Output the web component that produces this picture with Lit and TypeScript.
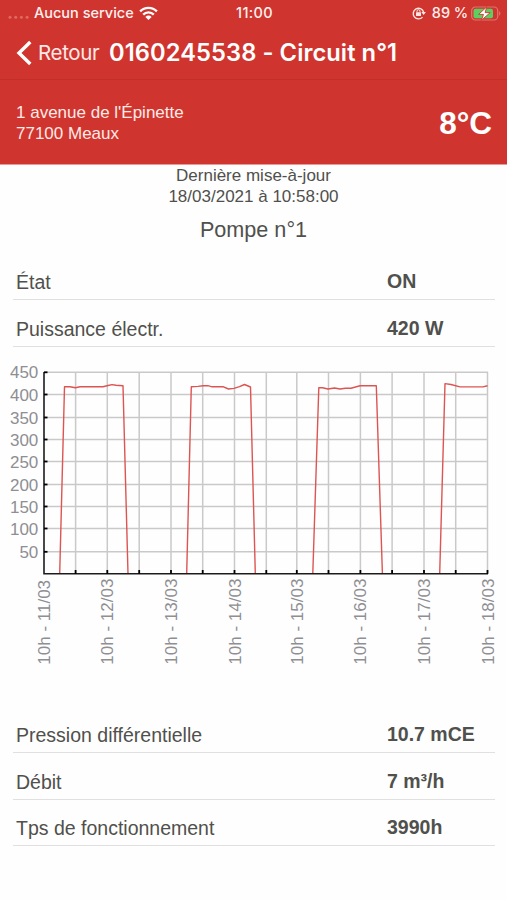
import { LitElement, html, svg, css } from "lit";
import { customElement, property } from "lit/decorators.js";

type Row = { label: string; value: string };

@customElement("status-bar")
class StatusBar extends LitElement {
  static styles = css`
    :host { display: grid; grid-template-columns: 1fr auto 1fr; height: 27px; align-items: center; padding: 0 6px 1px 8px; box-sizing: border-box; font: 500 14.5px/26px Inter, "Liberation Sans", sans-serif; color: #fff0ee; }
    .side { display: flex; align-items: center; height: 26px; }
    .right { justify-content: flex-end; }
    .carrier { margin-left: 4px; white-space: nowrap; }
    .clock { letter-spacing: 0.35px; }
    .wifi { margin-left: 5px; }
    .pct { margin: 0 3px 0 6px; white-space: nowrap; letter-spacing: -0.1px; }
    svg { display: block; flex: none; }
  `;
  render() {
    return html`
      <div class="side">
        <svg width="22" height="20" fill="#de6a63">
          <circle cx="2" cy="14.2" r="1.5" /><circle cx="7.7" cy="14.2" r="1.5" /><circle cx="13.4" cy="14.2" r="1.5" /><circle cx="19.1" cy="14.2" r="1.5" />
        </svg>
        <span class="carrier">Aucun service</span>
        <svg class="wifi" width="19" height="14" viewBox="0 0 19 14">
          <g fill="none" stroke="#fff" stroke-width="2.3">
            <path d="M1.1 5.4a11.9 11.9 0 0 1 16.8 0" /><path d="M4.2 8.6a7.5 7.5 0 0 1 10.6 0" />
          </g>
          <path fill="#fff" d="M6.4 10.9a4.4 4.4 0 0 1 6.2 0L9.5 14z" />
        </svg>
      </div>
      <span class="clock">11:00</span>
      <div class="side right">
        <svg width="14" height="14" viewBox="0 0 14 14">
          <path d="M10.5 11.1A5.3 5.3 0 1 1 11.6 6" fill="none" stroke="#ffe6e3" stroke-width="1.4" />
          <path d="M9.3 6.1h4.6l-2.3 3z" fill="#ffe6e3" />
          <rect x="4" y="6.2" width="5" height="3.8" rx=".6" fill="#ffe6e3" />
          <path d="M5 6.4V5.2a1.5 1.5 0 0 1 3 0v1.2" fill="none" stroke="#ffe6e3" stroke-width="1" />
        </svg>
        <span class="pct">89 %</span>
        <svg width="30" height="15" viewBox="0 0 30 15">
          <rect x=".7" y="1" width="26" height="13" rx="3.6" fill="none" stroke="#de756e" stroke-width="1.2" />
          <path d="M28.1 5.3c1.7.5 1.7 3.9 0 4.4z" fill="#de756e" />
          <rect x="2.5" y="2.8" width="19.5" height="9.4" rx="2" fill="#5fce62" />
          <path d="M15.8 .8 7.6 8.4h4.9L10.4 14.3 19.2 6.6h-5.1z" fill="#fff" stroke="#cf352e" stroke-width=".9" />
        </svg>
      </div>
    `;
  }
}

@customElement("data-rows")
class DataRows extends LitElement {
  @property({ attribute: false }) rows: Row[] = [];
  static styles = css`
    :host { display: block; padding: 0 12px 0 13px; color: #50504c; font: 19.5px/24px "Liberation Sans", Arial, sans-serif; }
    .row { display: grid; grid-template-columns: 371px 1fr; height: 46.5px; align-items: end; box-sizing: border-box; padding: 0 0 5px 3px; border-bottom: 1.5px solid #e0e0e0; }
    .value { font-weight: 700; padding: 0 0 1px 0; }
  `;
  render() {
    return this.rows.map(
      (r) => html`<div class="row"><span>${r.label}</span><span class="value">${r.value}</span></div>`
    );
  }
}

@customElement("power-chart")
class PowerChart extends LitElement {
  static styles = css`
    :host { display: block; height: 320px; }
    svg { display: block; }
    .grid { stroke: #c9c9c9; stroke-width: 1.5; }
    .axis { stroke: #1c1c1e; stroke-width: 1.6; fill: none; }
    .tick { stroke: #000; stroke-width: 1.8; }
    .series { stroke: #dc5552; stroke-width: 1.4; fill: none; stroke-linejoin: round; }
    text { font: 17px "Liberation Sans", Arial, sans-serif; fill: #8e8e93; }
  `;
  private xs = [44, 75.6, 107.3, 139.2, 171, 202.7, 234.5, 266.3, 296.8, 328.5, 360.4, 392.1, 424, 455.7, 487.5];
  private ys = [12.3, 34.5, 57.5, 79.5, 101.5, 124.5, 146.5, 168.5, 191.8];
  private runs = [
    "M59.7 213.5 64.5 26.8H70L75.5 27.8 80 26.8H103L108 25.5 112 24.6 116 25.3 123 25.8 128 213.5",
    "M186.7 213.5 191.3 26.8 198 26.4 203 25.7H208L212 26.8H223.5L228.5 29 234 28.4 239.5 26.7 244.5 24.5 250.5 27 255.3 213.5",
    "M312.8 213.5 318.8 27.8H322.5L328 29 334.5 28 340 29 345.5 28.2H351L360 25.8H376.3L382.4 213.5",
    "M439.7 213.5 445 23.6 451 24.5 460 26.9H483L487.5 25.8",
  ];
  render() {
    return svg`<svg width="507" height="320" viewBox="0 0 507 320">
      ${this.ys.map((y) => svg`<line class="grid" x1="44" x2="488" y1=${y} y2=${y} />`)}
      ${this.xs.slice(1).map((x) => svg`<line class="grid" x1=${x} x2=${x} y1="12" y2="213" />`)}
      ${this.runs.map((d) => svg`<path class="series" d=${d} />`)}
      <path class="axis" d="M44 12V213.8H488" />
      ${this.ys.map((y) => svg`<line class="tick" x1="44" x2="47.5" y1=${y} y2=${y} />`)}
      ${this.xs.slice(1).map((x) => svg`<line class="tick" x1=${x} x2=${x} y1="210" y2="213.8" />`)}
      ${this.ys.map((y, i) => svg`<text x="38.3" y=${y + 6} text-anchor="end">${450 - i * 50}</text>`)}
      ${[11, 12, 13, 14, 15, 16, 17, 18].map(
        (d, i) => svg`<text transform="translate(${this.xs[i * 2] + 6} 304.7) rotate(-90)">10h - ${d}/03</text>`
      )}
    </svg>`;
  }
}

@customElement("app-root")
class AppRoot extends LitElement {
  static styles = css`
    :host { display: block; width: 507px; height: 900px; overflow: hidden; background: #fefefe; color: #50504c; font: 17px/21px "Liberation Sans", Arial, sans-serif; }
    .top { background: #cf352e; color: #fff; height: 165px; border-bottom: 1px solid #e89a96; box-sizing: border-box; }
    .nav { display: flex; align-items: center; height: 53px; box-sizing: border-box; padding: 0 0 1px 16px; border-bottom: 1px solid #c52f29; font-family: Inter, "Liberation Sans", sans-serif; line-height: 50px; white-space: nowrap; }
    .back { margin-left: 5px; width: 71px; font-size: 20.5px; color: #ffe9e7; letter-spacing: -0.35px; }
    .title { font-size: 23.7px; font-weight: 600; letter-spacing: 0.08px; }
    .site { display: flex; justify-content: space-between; align-items: center; height: 85px; padding: 0 15px 0 16px; color: #ffe9e7; }
    .temp { font-size: 31.5px; line-height: 36px; font-weight: 700; color: #fff; }
    .update { text-align: center; }
    .pump { text-align: center; font-size: 21.6px; line-height: 26px; margin-top: 10px; }
    .first { margin-top: 10.5px; }
    .chart { margin-top: 13.5px; }
    .second { margin-top: 26.5px; }
  `;
  render() {
    return html`
      <header class="top">
        <status-bar></status-bar>
        <nav class="nav">
          <svg width="17" height="28" viewBox="0 0 17 28"><path d="M14.3 3 3 14 14.3 25" fill="none" stroke="#fff" stroke-width="3.4" /></svg>
          <span class="back">Retour</span>
          <span class="title">0160245538 - Circuit n°1</span>
        </nav>
        <div class="site">
          <div>1 avenue de l'Épinette<br />77100 Meaux</div>
          <div class="temp">8°C</div>
        </div>
      </header>
      <main>
        <div class="update">Dernière mise-à-jour<br />18/03/2021 à 10:58:00</div>
        <div class="pump">Pompe n°1</div>
        <data-rows class="first" .rows=${[{ label: "État", value: "ON" }, { label: "Puissance électr.", value: "420 W" }]}></data-rows>
        <power-chart class="chart"></power-chart>
        <data-rows class="second" .rows=${[
          { label: "Pression différentielle", value: "10.7 mCE" },
          { label: "Débit", value: "7 m³/h" },
          { label: "Tps de fonctionnement", value: "3990h" },
        ]}></data-rows>
      </main>
    `;
  }
}
